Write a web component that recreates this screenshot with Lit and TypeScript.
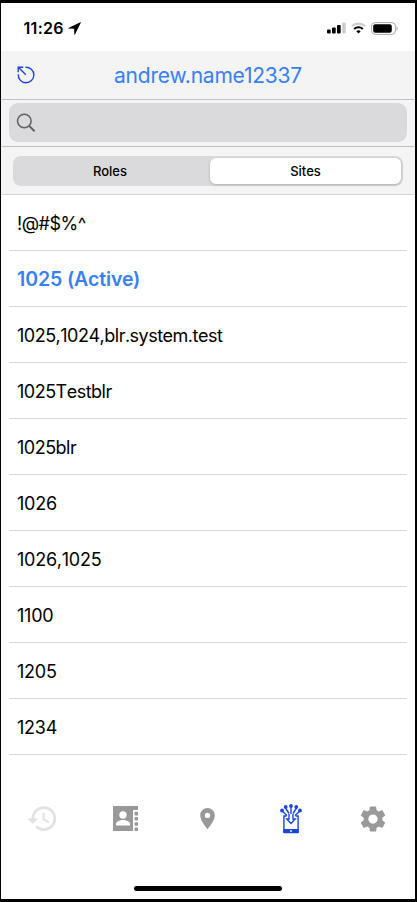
import { LitElement, html, css, svg } from "lit";
import { customElement, state } from "lit/decorators.js";
import { classMap } from "lit/directives/class-map.js";

const SITES = ["!@#$%^", "1025", "1025,1024,blr.system.test", "1025Testblr", "1025blr", "1026", "1026,1025", "1100", "1205", "1234"];

const historyIcon = svg`<svg width="33" height="33" viewBox="0 0 24 24"><path fill="#e2e2e2" d="M13 3c-4.97 0-9 4.03-9 9H1l3.89 3.89.07.14L9 12H6c0-3.87 3.13-7 7-7s7 3.13 7 7-3.13 7-7 7c-1.93 0-3.68-.79-4.94-2.06l-1.42 1.42C8.27 19.99 10.51 21 13 21c4.97 0 9-4.03 9-9s-4.03-9-9-9zm-1 5v5l4.28 2.54.72-1.21-3.5-2.08V8H12z"/></svg>`;

const contactsIcon = svg`<svg width="25" height="25" viewBox="0 0 25 25"><g fill="#999"><path d="M0 0H25V4H20V25H0Z"/><rect x="21.5" y="0" width="3.8" height="4" rx=".8"/><rect x="21.5" y="5.8" width="3.8" height="3.6" rx="1"/><rect x="21.5" y="11" width="3.8" height="3.6" rx="1"/><rect x="21.5" y="16.2" width="3.8" height="3.6" rx="1"/><rect x="21.5" y="21.4" width="3.8" height="3.6" rx="1"/></g><g fill="#fff"><circle cx="10" cy="9" r="3.7"/><path d="M3 19.5v-1.7c0-2.6 4.4-3.9 7-3.9s7 1.3 7 3.9v1.7z"/></g></svg>`;

const pinIcon = svg`<svg class="nudge" width="25" height="25" viewBox="0 0 24 24"><path fill="#999" d="M12 2C8.13 2 5 5.13 5 9c0 5.25 7 13 7 13s7-7.75 7-13c0-3.87-3.13-7-7-7zm0 9.5a2.5 2.5 0 0 1 0-5 2.5 2.5 0 0 1 0 5z"/></svg>`;

const deviceIcon = svg`<svg width="22" height="30" viewBox="0 0 22 30"><g fill="none" stroke="#1c46d8" stroke-width="1.4"><path d="M6.500 12H3.900V28H18.100V12H15.500"/><path d="M2 7l5 4.500M5.500 4L9 9.500M11 3v7M16.500 4L13 9.500M20 7l-5 4.500M9 10v5H6.800l4.200 4.500 4.200-4.500H13v-5"/></g><g fill="#1c46d8"><rect x="3.200" y="25" width="15.600" height="4.300" rx="1"/><circle cx="2" cy="6.500" r="1.900"/><circle cx="5.700" cy="3" r="1.900"/><circle cx="11" cy="2" r="1.900"/><circle cx="16.300" cy="3" r="1.900"/><circle cx="20" cy="6.500" r="1.900"/></g><circle cx="11" cy="27" r=".9" fill="#fff"/></svg>`;

const gearIcon = svg`<svg class="nudge" width="30" height="30" viewBox="0 0 24 24"><path fill="#999" d="M19.430 12.980c.04-.32.07-.64.07-.98s-.03-.66-.07-.98l2.110-1.650c.19-.15.24-.42.12-.64l-2-3.460c-.12-.22-.39-.3-.61-.22l-2.490 1c-.52-.4-1.080-.73-1.690-.98l-.38-2.650C14.460 2.180 14.250 2 14 2h-4c-.25 0-.46.18-.49.42l-.38 2.650c-.61.25-1.170.59-1.690.98l-2.490-1c-.23-.09-.49 0-.61.22l-2 3.460c-.13.22-.07.49.12.64l2.110 1.650c-.04.32-.07.65-.07.98s.03.66.07.98l-2.110 1.650c-.19.15-.24.42-.12.64l2 3.460c.12.22.39.3.61.22l2.490-1c.52.4 1.080.73 1.690.98l.38 2.650c.03.24.24.42.49.42h4c.25 0 .46-.18.49-.42l.38-2.650c.61-.25 1.170-.59 1.690-.98l2.490 1c.23.09.49 0 .61-.22l2-3.460c.12-.22.07-.49-.12-.64l-2.110-1.650zM12 15.700a3.700 3.700 0 1 1 0-7.400 3.700 3.700 0 0 1 0 7.400z"/></svg>`;

@customElement("app-root")
export class AppRoot extends LitElement {
  @state() private segment = "Sites";
  @state() private active = "1025";

  static styles = css`
    :host { display: flex; flex-direction: column; box-sizing: border-box; width: 417px; height: 902px; border: solid #000; border-width: 3px 2px 3px 1px; background: #fff; color: #000; font-family: Inter, sans-serif; overflow: hidden; }
    * { box-sizing: border-box; }
    svg { display: block; flex: none; }
    .status { height: 48px; flex: none; display: flex; align-items: center; padding: 2px 17px 0 22.500px; }
    .time { font-size: 16px; font-weight: 600; letter-spacing: 0.3px; margin-right: 4px; }
    .indicators { display: flex; align-items: center; gap: 5px; margin-left: auto; }
    .header { height: 49px; flex: none; display: grid; grid-template-columns: 48px 1fr 48px; align-items: center; background: #f4f4f4; border-bottom: 1px solid #c2c2c4; }
    .header svg { margin-left: 15px; }
    .title { text-align: center; font-size: 21px; line-height: 46px; padding-top: 2px; color: #3880f6; letter-spacing: -0.22px; }
    .search { height: 47px; flex: none; padding: 3px 8px 4px; background: #f4f4f4; border-bottom: 1px solid #c2c2c4; }
    .field { height: 39px; display: flex; align-items: center; padding-left: 7px; border-radius: 9px; background: #dadadc; }
    .segments { height: 48px; flex: none; padding: 9px 12px; background: #f4f4f4; border-bottom: 1px solid #d6d6d8; }
    .track { display: grid; grid-template-columns: 193px 191px; column-gap: 2px; height: 30px; padding: 2px; background: #dadadc; border-radius: 8px; }
    .seg { display: flex; align-items: center; justify-content: center; font-size: 13px; font-weight: 500; border-radius: 6px; }
    .seg:first-child { padding-right: 3px; }
    .seg.on { background: #fff; box-shadow: 0 1px 3px #0003; }
    .list { flex: none; padding: 0 8px; }
    .row { height: 56px; display: flex; align-items: center; padding: 1px 8px 0; border-bottom: 1px solid #d9d9d9; font-size: 18px; letter-spacing: -0.5px; font-kerning: none; white-space: pre; }
    .row.numeric { letter-spacing: -0.25px; }
    .row.active { color: #3880f6; font-size: 19.5px; font-weight: 600; letter-spacing: -0.1px; font-kerning: auto; }
    .tabs { height: 127px; flex: none; display: grid; grid-template-columns: repeat(5, 1fr); align-items: center; justify-items: center; }
    .nudge { margin-right: 1px; }
    .home { width: 148px; height: 5px; border-radius: 3px; background: #000; margin: 4px auto 0; }
  `;

  render() {
    return html`
      <div class="status">
        <span class="time">11:26</span>
        <svg width="13" height="13" viewBox="0 0 13 13"><path d="M12.300.3L.5 5.900q-.8.500.1.700l5.500.2.200 5.500q.200.900.700.100L12.800.8q.1-.700-.5-.5z"/></svg>
        <div class="indicators">
          <svg width="19" height="12" viewBox="0 0 19 12"><rect x="0" y="7.500" width="3.700" height="4" rx="1"/><rect x="5" y="5.500" width="3.700" height="6" rx="1"/><rect x="10" y="3" width="3.700" height="8.500" rx="1"/><rect x="15.200" y=".5" width="3.500" height="11" rx="1" fill="#ccc"/></svg>
          <svg width="15" height="12" viewBox="0 0 15 12" fill="none" stroke-width="2.100"><path stroke="#ccc" d="M.8 4.300a9.700 9.700 0 0 1 13.400 0"/><path stroke="#000" d="M3.200 7a6.300 6.300 0 0 1 8.600 0"/><path fill="#000" d="M5.300 9.300a3.300 3.300 0 0 1 4.400 0L7.500 11.600z"/></svg>
          <svg width="27" height="13" viewBox="0 0 27 13"><rect x=".6" y=".6" width="23.800" height="11.800" rx="3.500" fill="none" stroke="#aaa"/><rect x="2.200" y="2.200" width="18.600" height="8.600" rx="2"/><path fill="#aaa" d="M25.500 4.300q1.300.7 1.300 2.200t-1.300 2.200z"/></svg>
        </div>
      </div>
      <div class="header">
        <svg width="20" height="20" viewBox="0 0 20 20" fill="none" stroke="#1c46d8" stroke-width="1.400"><path d="M9.500 2.200A7.800 7.800 0 1 1 2.300 9.200M9.800 9.800L2.600 2.600M2.200 7.200V2.200H7.200"/></svg>
        <div class="title">andrew.name12337</div>
      </div>
      <div class="search"><div class="field">
        <svg width="20" height="20" viewBox="0 0 20 20" fill="none" stroke="#616164"><circle cx="8.300" cy="8" r="6.800" stroke-width="1.500"/><path d="M13.200 12.900L18.600 18.200" stroke-width="2"/></svg>
      </div></div>
      <div class="segments"><div class="track">
        ${["Roles", "Sites"].map((s) => html`<div class=${classMap({ seg: true, on: s === this.segment })} @click=${() => (this.segment = s)}>${s}</div>`)}
      </div></div>
      <div class="list">
        ${SITES.map((s) => html`<div class=${classMap({ row: true, numeric: /^[\d,]+$/.test(s), active: s === this.active })} @click=${() => (this.active = s)}>${s === this.active ? `${s} (Active)` : s}</div>`)}
      </div>
      <div class="tabs">${[historyIcon, contactsIcon, pinIcon, deviceIcon, gearIcon]}</div>
      <div class="home"></div>
    `;
  }
}
